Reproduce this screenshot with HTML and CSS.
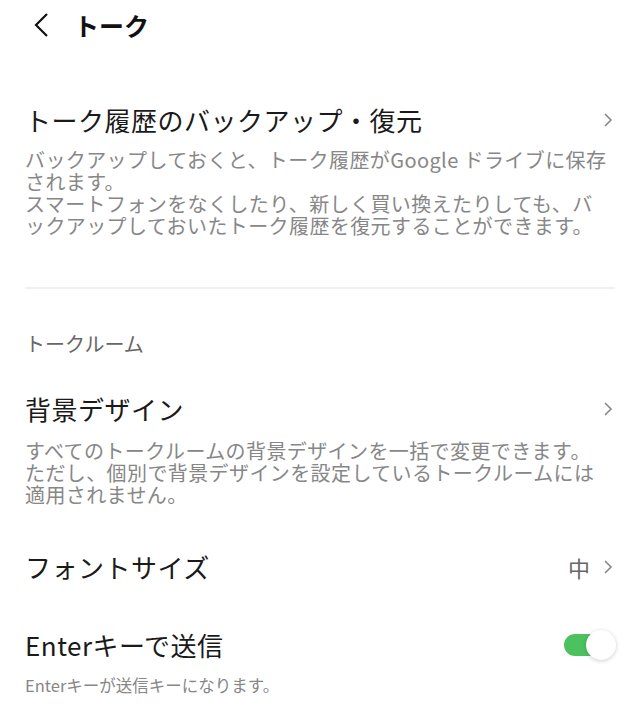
FILE: index.html
```html
<!DOCTYPE html>
<html lang="ja">
<head>
    <meta charset="UTF-8">
    <meta name="viewport" content="width=device-width, initial-scale=1.0">
    <title>トーク</title>
    <link rel="stylesheet" href="styles.css">
</head>
<body>
    <div class="header">
        <svg class="back-icon" width="16" height="26" viewBox="0 0 16 26">
            <polyline points="14,2 3,13 14,24" fill="none" stroke="#111" stroke-width="2.2"/>
        </svg>
        <h1 class="header-title">トーク</h1>
    </div>

    <div class="setting first">
        <div class="setting-row">
            <span class="setting-title">トーク履歴のバックアップ・復元</span>
            <svg class="chevron" width="10" height="16" viewBox="0 0 10 16">
                <polyline points="2,2 8,8 2,14" fill="none" stroke="#888" stroke-width="1.6"/>
            </svg>
        </div>
        <p class="setting-desc">バックアップしておくと、トーク履歴がGoogle ドライブに保存<br>されます。<br>スマートフォンをなくしたり、新しく買い換えたりしても、バ<br>ックアップしておいたトーク履歴を復元することができます。</p>
    </div>

    <hr class="divider">

    <div class="section-label">トークルーム</div>

    <div class="setting bg-design">
        <div class="setting-row">
            <span class="setting-title">背景デザイン</span>
            <svg class="chevron" width="10" height="16" viewBox="0 0 10 16">
                <polyline points="2,2 8,8 2,14" fill="none" stroke="#888" stroke-width="1.6"/>
            </svg>
        </div>
        <p class="setting-desc">すべてのトークルームの背景デザインを一括で変更できます。<br>ただし、個別で背景デザインを設定しているトークルームには<br>適用されません。</p>
    </div>

    <div class="setting font-size">
        <div class="setting-row">
            <span class="setting-title">フォントサイズ</span>
            <span class="setting-value">
                中
                <svg class="chevron" width="10" height="16" viewBox="0 0 10 16">
                    <polyline points="2,2 8,8 2,14" fill="none" stroke="#888" stroke-width="1.6"/>
                </svg>
            </span>
        </div>
    </div>

    <div class="setting enter-send">
        <div class="setting-row">
            <span class="setting-title">Enterキーで送信</span>
            <span class="toggle on"><span class="knob"></span></span>
        </div>
        <p class="setting-desc small">Enterキーが送信キーになります。</p>
    </div>
</body>
</html>
```

FILE: styles.css
```css
body {
    margin: 0;
    padding: 0 25px;
    background-color: #fff;
    font-family: "Noto Sans CJK JP", "Noto Sans", sans-serif;
    color: #1a1a1a;
}

.header {
    height: 50px;
    display: flex;
    align-items: center;
}

.back-icon {
    margin-left: 8px;
    display: block;
}

.header-title {
    margin: 0 0 0 25px;
    font-size: 25px;
    font-weight: bold;
    line-height: 50px;
    color: #111;
}

.setting.first {
    padding-top: 52px;
}

.setting-row {
    display: flex;
    justify-content: space-between;
    align-items: center;
    height: 36px;
}

.setting-title {
    font-size: 26px;
    letter-spacing: 0.5px;
    line-height: 36px;
    color: #1a1a1a;
}

.chevron {
    display: block;
    margin-right: 2px;
}

.setting-desc {
    margin: 11px 0 0;
    font-size: 20px;
    letter-spacing: 0.4px;
    line-height: 22px;
    color: #878787;
    white-space: nowrap;
}

.setting-desc.small {
    font-size: 16.5px;
    letter-spacing: 0;
    margin-top: 11px;
}

.divider {
    border: none;
    border-top: 2px solid #f0f0f0;
    margin: 50px 0 0;
}

.section-label {
    margin-top: 43px;
    font-size: 20px;
    line-height: 24px;
    color: #666;
}

.setting.bg-design {
    margin-top: 35px;
}

.setting.bg-design .setting-desc {
    margin-top: 13px;
}

.setting.font-size {
    margin-top: 43px;
}

.setting-value {
    display: flex;
    align-items: center;
    gap: 13px;
    font-size: 22px;
    color: #666;
}

.setting.enter-send {
    margin-top: 42px;
}

.toggle {
    position: relative;
    width: 48px;
    height: 22px;
    margin-right: 3px;
    border-radius: 11px;
    background-color: #4cc25f;
}

.toggle .knob {
    position: absolute;
    right: -4px;
    top: -4px;
    width: 30px;
    height: 30px;
    border-radius: 50%;
    background-color: #fff;
    box-shadow: 0 1px 4px rgba(0, 0, 0, 0.2);
}
```
